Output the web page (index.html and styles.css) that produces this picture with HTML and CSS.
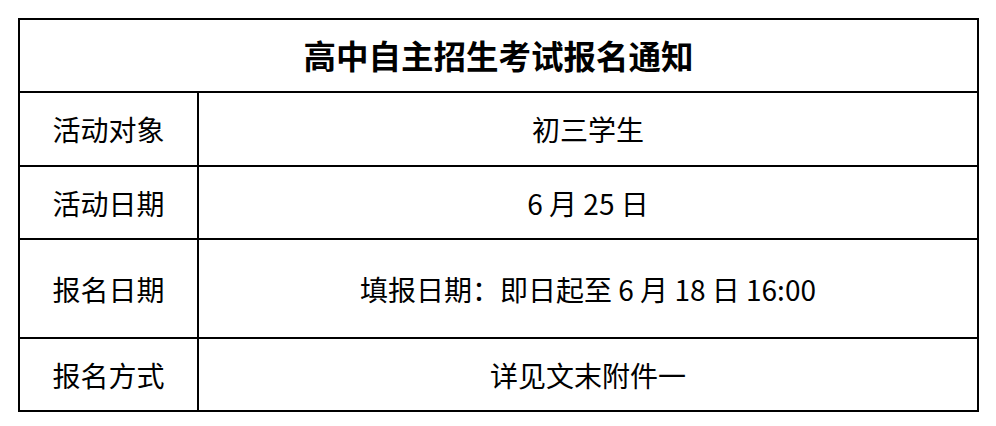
FILE: index.html
```html
<!DOCTYPE html>
<html lang="zh-CN">
<head>
<meta charset="utf-8">
<title>高中自主招生考试报名通知</title>
<link rel="stylesheet" href="styles.css">
</head>
<body>
<div class="notice">
  <div class="cell title">高中自主招生考试报名通知</div>
  <div class="cell label r1">活动对象</div>
  <div class="cell value r1">初三学生</div>
  <div class="cell label r2">活动日期</div>
  <div class="cell value r2">6 月 25 日</div>
  <div class="cell label r3">报名日期</div>
  <div class="cell value r3">填报日期：即日起至 6 月 18 日 16:00</div>
  <div class="cell label r4">报名方式</div>
  <div class="cell value r4">详见文末附件一</div>
</div>
</body>
</html>
```

FILE: styles.css
```css
html, body {
  margin: 0;
  padding: 0;
  background: #ffffff;
}
body {
  padding: 18px 0 0 18px;
  font-family: "Noto Sans CJK SC", "Noto Sans", sans-serif;
  color: #000000;
}
.notice {
  display: grid;
  width: 961px;
  box-sizing: border-box;
  grid-template-columns: 179px 780px;
  grid-template-rows: 73px 74px 73px 99px 73px;
  border-left: 2px solid #000;
  border-top: 2px solid #000;
}
.cell {
  display: flex;
  align-items: center;
  justify-content: center;
  border-right: 2px solid #000;
  border-bottom: 2px solid #000;
  font-size: 28px;
  line-height: 1;
}
.title {
  grid-column: 1 / 3;
  font-size: 32.5px;
  font-weight: 700;
}
```
